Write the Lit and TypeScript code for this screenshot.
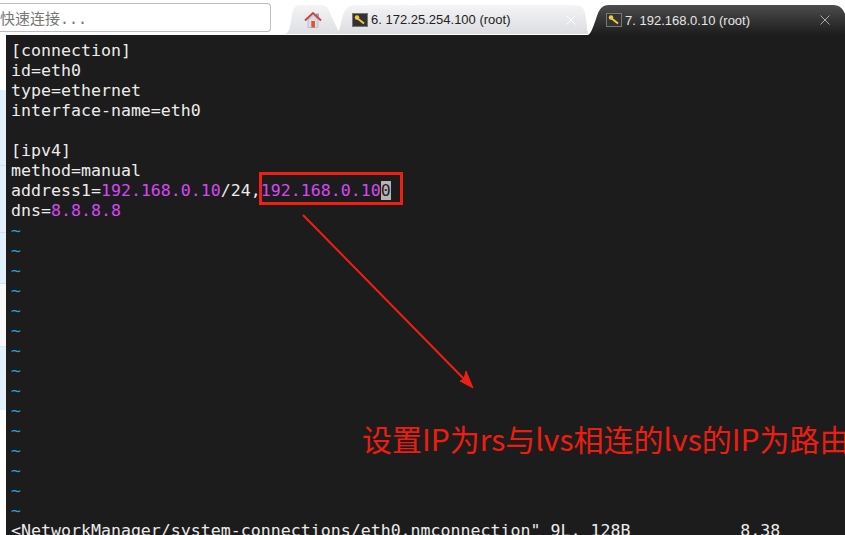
import { LitElement, html, css, svg } from "lit";
import { customElement } from "lit/decorators.js";

const key = svg`<svg class="key" width="16" height="14" viewBox="0 0 16 14"><rect x="0.5" y="0.5" width="15" height="13" fill="#333" stroke="#777"/><path d="M5 5 L12 10.5" stroke="#f5c842" stroke-width="2"/><circle cx="5" cy="4.5" r="2.3" fill="#f5c842"/></svg>`;
const home = svg`<svg width="18" height="18" viewBox="0 0 18 18"><path d="M4 9 V16.5 H14 V9 L9 4.5Z" fill="#d8dce8" stroke="#b9bfd6"/><rect x="12" y="2.5" width="3" height="4" fill="#9aa0c8"/><rect x="7.3" y="10" width="3.6" height="6.5" fill="#e8501c"/><path d="M1 9.5 L9 2 L17 9.5" fill="none" stroke="#d0403a" stroke-width="2"/></svg>`;
const closeX = svg`<svg class="x" width="10" height="10" viewBox="0 0 10 10"><path d="M0.5 0.5 L9.5 9.5 M9.5 0.5 L0.5 9.5" stroke="currentColor" stroke-width="1" fill="none"/></svg>`;

@customElement("app-root")
export class AppRoot extends LitElement {
  static styles = css`
    :host { display: block; width: 845px; height: 535px; position: relative; overflow: hidden; background: #fff; font-family: "Liberation Sans", Arial, sans-serif; }
    .top { height: 35px; display: flex; align-items: flex-end; background: #fff; }
    .quick { box-sizing: border-box; width: 271px; height: 29px; margin: 0 13px 3px 0; flex: none; border: 1px solid #bdbdbd; border-left: 0; border-radius: 0 4px 4px 0; font: 15px "DejaVu Sans Mono", "Noto Sans CJK SC", monospace; color: #777; display: flex; align-items: center; white-space: nowrap; }
    .tab { box-sizing: border-box; height: 30px; flex: none; display: flex; align-items: center; font-size: 13px; white-space: nowrap; }
    .home { width: 58px; padding-left: 20px; margin-bottom: 1px; height: 29px; background: linear-gradient(#f4f4f6, #dedfe3); clip-path: path("M0 29 C6 29 6 20 8 10 C9 3 12 0 16 0 H36 C42 0 44 2 46 8 L53 23 C55 28 56 29 58 29 Z"); }
    .t6 { width: 253px; margin-left: -7px; margin-bottom: 1px; height: 29px; padding-left: 17px; gap: 3px; color: #222; background: linear-gradient(#f4f4f6, #dcdde1); clip-path: path("M0 29 C4 29 5 22 7 14 C9 5 12 0 22 0 H238 C247 0 249 3 250 8 L253 29 Z"); }
    .t7 { width: 258px; margin-left: -1px; padding-left: 19px; gap: 3px; color: #e6e6e6; background: linear-gradient(#4c4c4c, #1c1c1c); clip-path: path("M0 30 C4 30 6 22 9 14 C12 4 15 0 22 0 H246 C253 0 256 4 258 9 V30 Z"); }
    .x { margin-left: auto; flex: none; }
    .t6 .x { color: #fff; margin-right: 12px; }
    .t7 .x { color: #aaa; margin-right: 15px; }
    .body { display: flex; height: 500px; }
    .strip { width: 6px; background: linear-gradient(#fff 0, #fff 55px, #e2f0fc 55px, #e2f0fc 130px, #cfe0ee 130px, #cfe0ee 131px, #e2f0fc 131px, #e2f0fc 197px, #cfe0ee 197px, #cfe0ee 198px, #e2f0fc 198px, #e2f0fc 248px, #ddd 248px, #ddd 249px, #f8f8f8 249px, #f8f8f8 311px, #cfe0ee 311px, #e2f0fc 312px, #e2f0fc 375px, #fff 375px, #fff 100%); }
    .term { flex: 1; box-sizing: border-box; background: #1c1c1c; padding: 6px 0 0 5px; font: 16.6px/20px "DejaVu Sans Mono", "Liberation Mono", monospace; color: #ececec; overflow: hidden; }
    .l { height: 20px; white-space: pre; }
    .n { color: #d648f5; }
    .t { color: #22a7e0; }
    .cur { background: #b5b5b5; color: #222; }
    .box { position: absolute; left: 259px; top: 172px; width: 144px; height: 33px; box-sizing: border-box; border: 3px solid #f01f14; }
    .arrow { position: absolute; left: 295px; top: 208px; }
    .note { position: absolute; left: 362px; top: 418px; font: 30px/40px "Noto Sans CJK SC", sans-serif; color: #ee1d10; white-space: nowrap; }
  `;

  render() {
    const tildes = Array.from({ length: 15 }, () => html`<div class="l t">~</div>`);
    return html`
      <div class="top">
        <div class="quick">快速连接...</div>
        <div class="tab home">${home}</div>
        <div class="tab t6">${key}<span>6. 172.25.254.100 (root)</span>${closeX}</div>
        <div class="tab t7">${key}<span>7. 192.168.0.10 (root)</span>${closeX}</div>
      </div>
      <div class="body">
        <div class="strip"></div>
        <div class="term">
          <div class="l">[connection]</div>
          <div class="l">id=eth0</div>
          <div class="l">type=ethernet</div>
          <div class="l">interface-name=eth0</div>
          <div class="l"> </div>
          <div class="l">[ipv4]</div>
          <div class="l">method=manual</div>
          <div class="l">address1=<span class="n">192.168.0.10</span>/24,<span class="n">192.168.0.10</span><span class="cur">0</span></div>
          <div class="l">dns=<span class="n">8.8.8.8</span></div>
          ${tildes}
          <div class="l">&lt;NetworkManager/system-connections/eth0.nmconnection" 9L, 128B           8,38</div>
        </div>
      </div>
      <div class="box"></div>
      <svg class="arrow" width="185" height="185" viewBox="0 0 185 185"><path d="M8 7 L170 172" stroke="#f01f14" stroke-width="2" fill="none"/><path d="M178 180 L165 173 L169 171 L171 163 Z" fill="#f01f14" stroke="#f01f14" stroke-width="1"/></svg>
      <div class="note">设置IP为rs与lvs相连的lvs的IP为路由</div>
    `;
  }
}
